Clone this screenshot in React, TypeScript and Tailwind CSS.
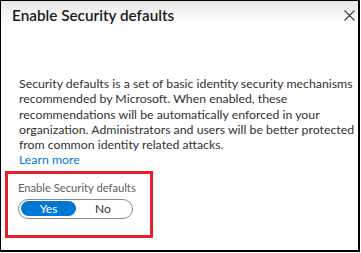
import React from "react";

export default function App() {
  return (
    <div
      className="w-[361px] h-[253px] bg-white"
      style={{ fontFamily: 'Lato, "Noto Sans", sans-serif' }}
    >
      <div className="w-[360px] h-[252px] border-l border-t border-r-2 border-b-2 border-black bg-gradient-to-b from-[#e6e6e6] via-white via-[9%] to-white flex flex-col">
        <div className="flex items-start justify-between h-[28px]">
          <div className="pl-[11px] pt-[4px] text-[15.3px] leading-[20px] font-semibold text-[#1b1b1b] whitespace-nowrap">
            Enable Security defaults
          </div>
          <svg
            className="mt-[9px] mr-[3px]"
            width="11"
            height="11"
            viewBox="0 0 11 11"
          >
            <path d="M0.5 0.5 L10.5 10.5 M10.5 0.5 L0.5 10.5" stroke="#3b3b3b" strokeWidth="1.1" />
          </svg>
        </div>
        <div className="pl-[18px] mt-[47px] text-[12.3px] leading-[15.3px] text-[#323130] whitespace-nowrap">
          <p>Security defaults is a set of basic identity security mechanisms</p>
          <p>recommended by Microsoft. When enabled, these</p>
          <p>recommendations will be automatically enforced in your</p>
          <p>organization. Administrators and users will be better protected</p>
          <p>from common identity related attacks.</p>
          <p className="text-[#0078d4]">Learn more</p>
        </div>
        <div className="ml-[4px] mt-[3px] w-[148px] h-[67px] border-[3px] border-[#e3202c] pl-[10px] pt-[7px]">
          <div className="text-[11.2px] leading-[14px] text-[#605e5c] whitespace-nowrap">Enable Security defaults</div>
          <div className="mt-[4px] w-[115px] h-[20px] rounded-full border border-[#8a8886] flex items-center p-[2px]">
            <div className="w-[55px] h-[15px] rounded-full bg-[#0078d4] text-white text-[12px] leading-[15px] flex items-center justify-center">
              Yes
            </div>
            <div className="flex-1 text-center text-[12px] leading-[15px] text-[#323130]">No</div>
          </div>
        </div>
      </div>
    </div>
  );
}
